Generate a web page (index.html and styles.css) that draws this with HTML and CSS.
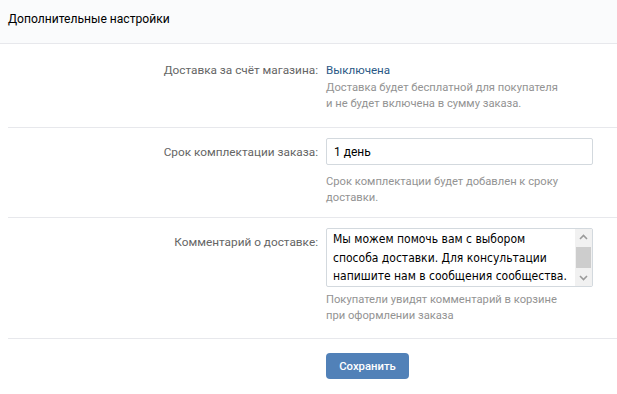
FILE: index.html
```html
<!DOCTYPE html>
<html lang="ru">
<head>
  <meta charset="UTF-8">
  <title>Дополнительные настройки</title>
  <link rel="stylesheet" href="styles.css">
</head>
<body>
  <div class="page-header">Дополнительные настройки</div>

  <div class="settings">
    <div class="row row-first">
      <div class="label">Доставка за счёт магазина:</div>
      <div class="field">
        <a class="value-link" href="#">Выключена</a>
        <div class="hint">Доставка будет бесплатной для покупателя<br>и не будет включена в сумму заказа.</div>
      </div>
    </div>

    <div class="row">
      <div class="label label-input">Срок комплектации заказа:</div>
      <div class="field">
        <div class="text-input">1 день</div>
        <div class="hint">Срок комплектации будет добавлен к сроку<br>доставки.</div>
      </div>
    </div>

    <div class="row row-last">
      <div class="label label-input">Комментарий о доставке:</div>
      <div class="field">
        <div class="textarea">
          <div class="textarea-text">Мы можем помочь вам с выбором способа доставки. Для консультации напишите нам в сообщения сообщества.</div>
          <div class="scrollbar">
            <svg class="arrow" width="17" height="17" viewBox="0 0 17 17"><path d="M5 10 L8.5 6.5 L12 10" fill="none" stroke="#9a9a9a" stroke-width="1.6"/></svg>
            <div class="scroll-track"><div class="scroll-thumb"></div></div>
            <svg class="arrow" width="17" height="17" viewBox="0 0 17 17"><path d="M5 7 L8.5 10.5 L12 7" fill="none" stroke="#9a9a9a" stroke-width="1.6"/></svg>
          </div>
        </div>
        <div class="hint">Покупатели увидят комментарий в корзине<br>при оформлении заказа</div>
      </div>
    </div>

    <div class="actions">
      <button class="btn">Сохранить</button>
    </div>
  </div>
</body>
</html>
```

FILE: styles.css
```css
* {
  box-sizing: border-box;
}

body {
  margin: 0;
  background: #fff;
  font-family: Roboto, "Open Sans", sans-serif;
  font-size: 11.8px;
  color: #000;
}

.page-header {
  height: 44px;
  padding: 12px 8px 0;
  background: #fafbfc;
  border-bottom: 1px solid #e7e8ec;
  font-size: 12.1px;
  color: #000;
}

.settings {
  margin-left: 8px;
}

.row {
  display: grid;
  grid-template-columns: 310px 267px;
  column-gap: 8px;
  padding: 10px 0 11px;
  border-bottom: 1px solid #e7e8ec;
}

.row-first {
  padding: 18px 0 15px;
}

.row-last {
  padding-bottom: 14px;
}

.label {
  text-align: right;
  color: #656565;
  line-height: 16px;
}

.label-input {
  padding-top: 6px;
}

.value-link {
  display: block;
  line-height: 16px;
  font-size: 11.6px;
  color: #2a5885;
  text-decoration: none;
}

.hint {
  margin-top: 2px;
  line-height: 16px;
  font-size: 11.2px;
  color: #939393;
}

.text-input {
  height: 27px;
  padding: 5px 7px 0;
  border: 1px solid #d3d9de;
  border-radius: 2px;
  font-size: 12px;
  line-height: 16px;
  color: #000;
}

.text-input + .hint {
  margin-top: 9px;
}

.textarea + .hint {
  margin-top: 5px;
}

.textarea {
  display: flex;
  height: 59px;
  border: 1px solid #d3d9de;
  border-radius: 2px;
  overflow: hidden;
}

.textarea-text {
  flex: 1;
  padding: 1px 6px 0 6px;
  font-family: "DejaVu Sans Condensed", "DejaVu Sans", sans-serif;
  font-size: 12px;
  line-height: 18.5px;
  color: #000;
}

.scrollbar {
  width: 17px;
  display: flex;
  flex-direction: column;
  background: #f1f1f1;
}

.arrow {
  display: block;
}

.scroll-track {
  flex: 1;
  padding-top: 1px;
}

.scroll-thumb {
  height: 21px;
  margin: 0 1px;
  background: #cdcdcd;
}

.actions {
  padding: 14px 0 0 318px;
}

.btn {
  width: 83px;
  height: 26px;
  padding: 0;
  border: none;
  border-radius: 4px;
  background: #5181b8;
  color: #fff;
  font-family: Roboto, sans-serif;
  font-size: 11.3px;
  font-weight: 500;
}
```
